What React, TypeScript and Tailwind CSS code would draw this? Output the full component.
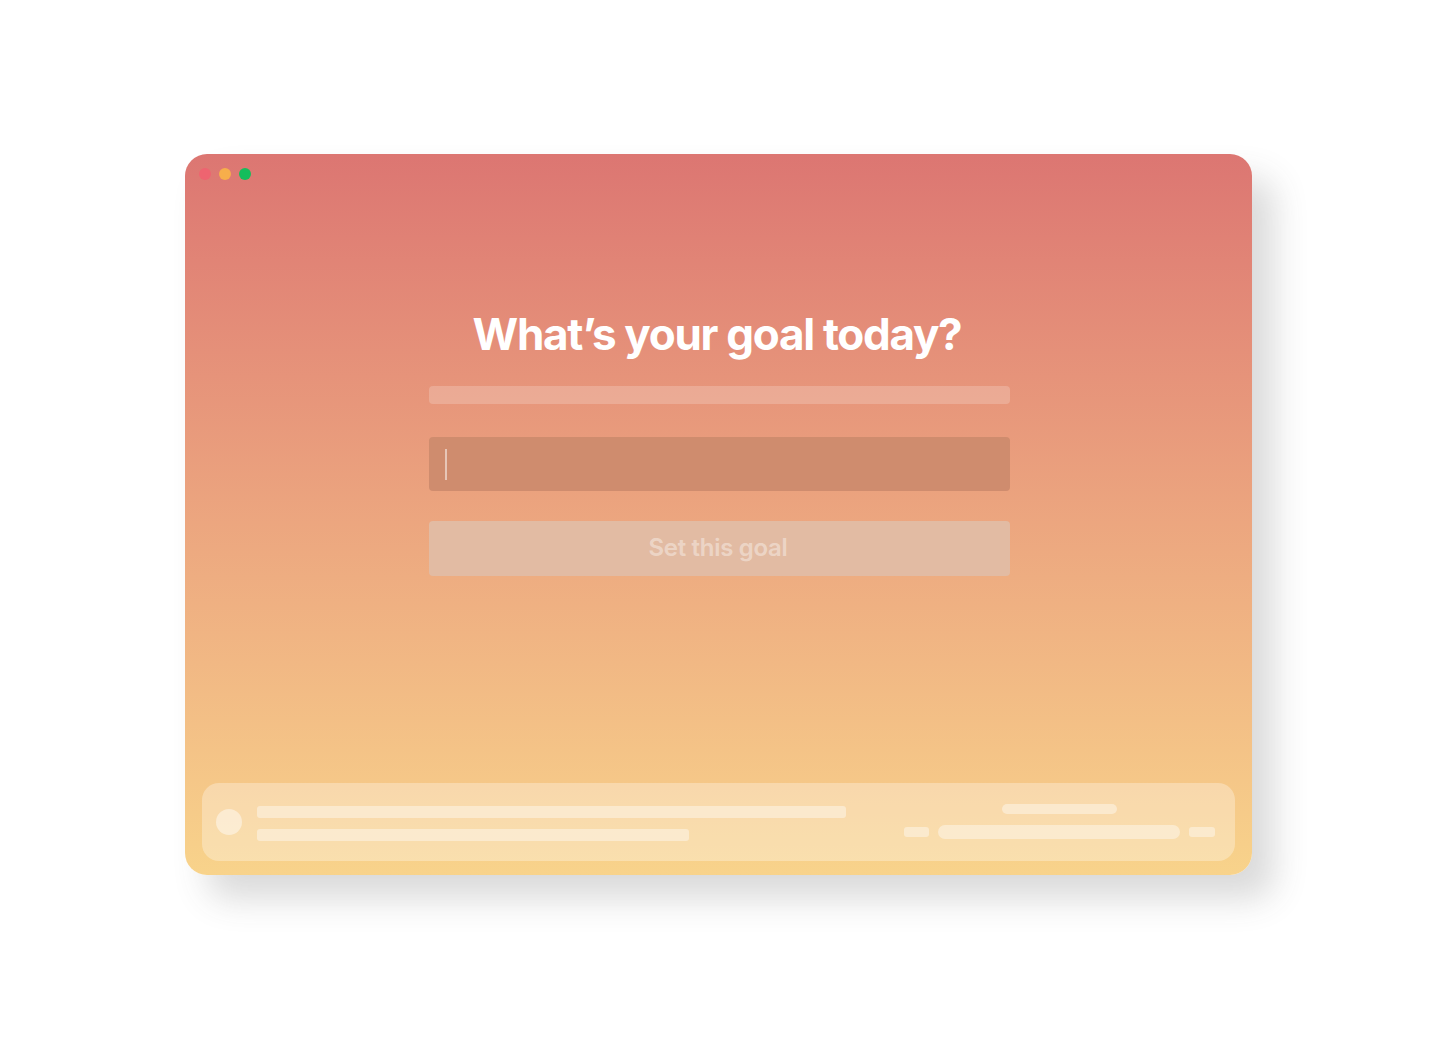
import React from "react";

const App = () => {
  return (
    <div className="w-full h-[1038px] bg-white flex justify-center pt-[154px] font-['Inter',sans-serif]">
      <div className="w-[1067px] h-[721px] rounded-[22px] bg-gradient-to-b from-[#dc7672] to-[#f8d38b] shadow-[22px_24px_34px_rgba(70,72,72,0.2)] flex flex-col">
        {/* traffic lights */}
        <div className="flex gap-[8px] pl-[14px] pt-[14px]">
          <span className="w-3 h-3 rounded-full bg-[#ee6470]" />
          <span className="w-3 h-3 rounded-full bg-[#f7ae4b]" />
          <span className="w-3 h-3 rounded-full bg-[#15bd5c]" />
        </div>

        <div className="flex flex-col items-center mt-[124px] pl-[1px]">
          <h1 className="text-[44px] leading-[60px] font-bold tracking-[-1.3px] text-white -ml-[4px]">What’s your goal today?</h1>
          <div className="w-[581px] mt-[22px] flex flex-col">
            <div className="h-[18px] rounded-[4px] bg-white/20" />
            <div className="h-[54px] mt-[33px] rounded-[4px] bg-[#cf8c6e] flex items-center pl-[16px]">
              <span className="w-[2px] h-[31px] bg-white/50" />
            </div>
            <button className="h-[55px] mt-[30px] rounded-[4px] bg-[#e2bba3] text-[24px] font-semibold text-white/40 tracking-[-0.3px] pb-[2px] pr-[2px]">
              Set this goal
            </button>
          </div>
        </div>

        {/* bottom bar */}
        <div className="mt-auto mx-[17px] mb-[14px] h-[78px] rounded-[17px] bg-white/30 flex items-center pl-[14px] pr-[20px]">
          <span className="w-[26px] h-[26px] rounded-full bg-white/45 shrink-0" />
          <div className="ml-[15px] flex flex-col gap-[11px] mt-[3px]">
            <div className="w-[589px] h-[12px] rounded-[3px] bg-white/40" />
            <div className="w-[432px] h-[12px] rounded-[3px] bg-white/40" />
          </div>
          <div className="ml-auto flex flex-col items-center gap-[11px] -mt-[1px]">
            <div className="w-[115px] h-[10px] rounded-full bg-white/40" />
            <div className="flex items-center gap-[9px]">
              <div className="w-[25px] h-[10px] rounded-[3px] bg-white/40" />
              <div className="w-[242px] h-[14px] rounded-full bg-white/40" />
              <div className="w-[26px] h-[10px] rounded-[3px] bg-white/40" />
            </div>
          </div>
        </div>
      </div>
    </div>
  );
};

export default App;
